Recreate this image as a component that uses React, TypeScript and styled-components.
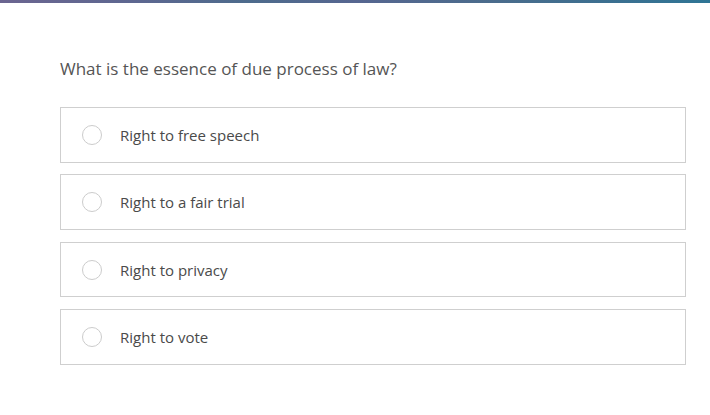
import styled, { createGlobalStyle } from "styled-components";

const GlobalStyle = createGlobalStyle`
  html, body {
    margin: 0;
    padding: 0;
    background: #ffffff;
    font-family: "Open Sans", "Liberation Sans", Arial, sans-serif;
  }
`;

const TopBar = styled.div`
  height: 3px;
  background: linear-gradient(
    90deg,
    #6b6590 0%,
    #5c6790 20%,
    #4d6b8c 35%,
    #566690 50%,
    #4a6c8c 70%,
    #3c6f90 85%,
    #2f7595 100%
  );
`;

const Page = styled.main`
  padding: 54px 24px 0 60px;
`;

const Question = styled.h2`
  margin: 0 0 26px;
  font-size: 17px;
  font-weight: 400;
  color: #555555;
  line-height: 24px;
`;

const Options = styled.ul`
  list-style: none;
  margin: 0;
  padding: 0;
  display: flex;
  flex-direction: column;
  gap: 11.8px;
`;

const Option = styled.li`
  box-sizing: border-box;
  height: 55.6px;
  border: 1px solid #cfcfcf;
  display: flex;
  align-items: center;
  gap: 18px;
  padding: 0 0 0 21px;
  cursor: pointer;
`;

const Radio = styled.span`
  box-sizing: border-box;
  width: 20px;
  height: 20px;
  border-radius: 50%;
  border: 1px solid #cccccc;
  background: #ffffff;
  flex-shrink: 0;
`;

const OptionText = styled.span`
  font-size: 15px;
  color: #4a4a4a;
`;

const answers = [
  "Right to free speech",
  "Right to a fair trial",
  "Right to privacy",
  "Right to vote",
];

const App = () => {
  return (
    <>
      <GlobalStyle />
      <TopBar />
      <Page>
        <Question>What is the essence of due process of law?</Question>
        <Options>
          {answers.map((answer) => (
            <Option key={answer}>
              <Radio />
              <OptionText>{answer}</OptionText>
            </Option>
          ))}
        </Options>
      </Page>
    </>
  );
};

export default App;
